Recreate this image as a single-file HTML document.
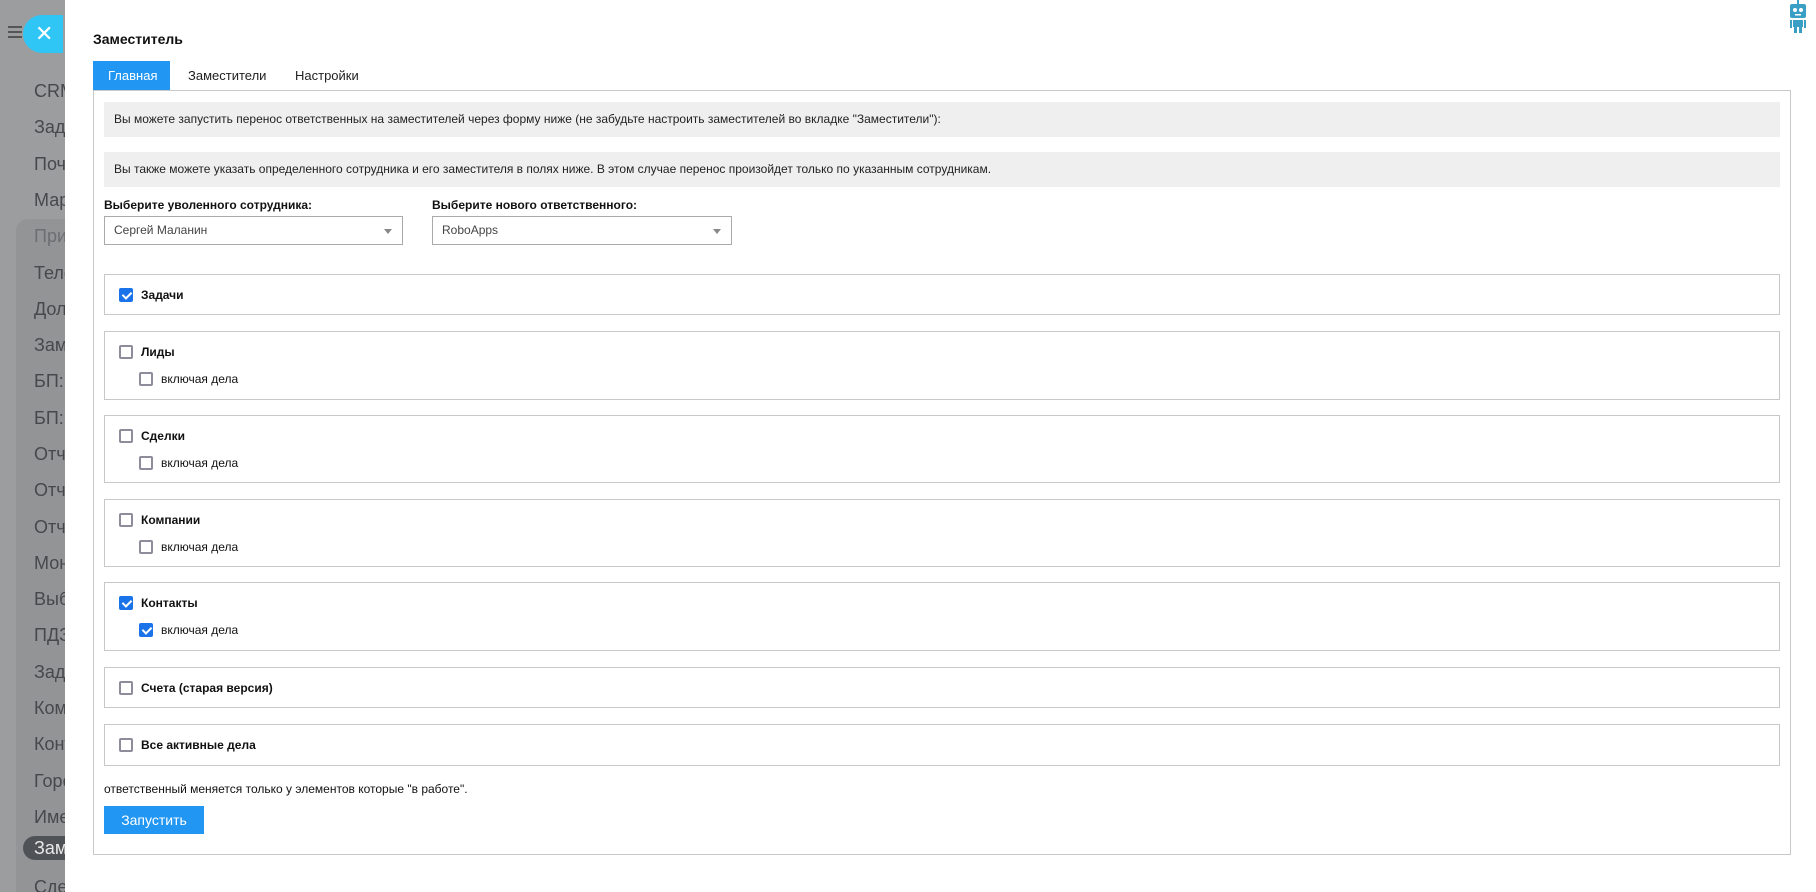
<!DOCTYPE html>
<html><head><meta charset="utf-8"><style>
*{box-sizing:border-box;margin:0;padding:0}
body{width:1816px;height:892px;overflow:hidden;font-family:"Liberation Sans",Arial,sans-serif;background:#fff;position:relative}
.side{position:absolute;left:0;top:0;width:65px;height:892px;background:#9b9d9f;overflow:hidden}
.side .inner{position:absolute;left:16px;top:219px;width:60px;height:700px;background:#929496;border-radius:12px 0 0 0}
.side .it{position:absolute;left:34px;font-size:18px;color:#46494c;white-space:nowrap;line-height:20px}
.side .act{position:absolute;left:23px;top:836px;width:60px;height:24px;background:#4f5358;border-radius:12px}
.x{position:absolute;left:23px;top:15px;width:40px;height:38px;border-radius:19px 0 0 19px;background:#2fc6f6;color:#fff;font-size:22px;line-height:38px;padding-left:12px}
.ham{position:absolute;left:8px;top:26px;width:14px;height:2px;background:#555;box-shadow:0 5px 0 #555,0 10px 0 #555}
.abs{position:absolute}
.title{left:93px;top:31px;font-size:14px;font-weight:bold;color:#111}
.tab{top:61px;height:29px;font-size:13px;line-height:29px;color:#222;padding:0 15px}
.tab.on{background:#2196f3;color:#fff}
.box{left:93px;top:90px;width:1698px;height:765px;border:1px solid #c8c8c8}
.bar{left:104px;width:1676px;height:35px;background:#efefef;font-size:12px;color:#222;line-height:35px;padding-left:10px}
.lbl{font-size:12px;font-weight:bold;color:#111}
.sel{height:29px;border:1px solid #aaa;font-size:12px;color:#444;line-height:27px;padding-left:9px;background:#fff}
.sel:after{content:"";position:absolute;right:10px;top:12px;border:4px solid transparent;border-top:5px solid #888}
.sec{left:104px;width:1676px;border:1px solid #c8c8c8}
.cb{position:absolute;width:14px;height:14px;border:2px solid #8c8c9a;border-radius:2px;background:#fff}
.cb.on{background:#1a73e8;border-color:#1a73e8}
.cb.on:after{content:"";position:absolute;left:3px;top:0px;width:4px;height:7px;border:solid #fff;border-width:0 2px 2px 0;transform:rotate(45deg)}
.t{position:absolute;font-size:12px;color:#111;line-height:14px;white-space:nowrap}
.t.b{font-weight:bold}
.note{left:104px;top:782px;font-size:12px;color:#111}
.btn{left:104px;top:806px;width:100px;height:28px;background:#2196f3;color:#fff;font-size:14px;line-height:28px;text-align:center}
</style></head><body>
<div class="side">
<div class="inner"></div>
<div class="act"></div>
<div class="it" style="top:81px">CRM</div>
<div class="it" style="top:117px">Задачи</div>
<div class="it" style="top:154px">Почта</div>
<div class="it" style="top:190px">Маркет</div>
<div class="it" style="top:226px;color:#6c6f72">Приложения</div>
<div class="it" style="top:263px">Телефония</div>
<div class="it" style="top:299px">Долги</div>
<div class="it" style="top:335px">Заместитель</div>
<div class="it" style="top:371px">БП: С</div>
<div class="it" style="top:408px">БП: З</div>
<div class="it" style="top:444px">Отчеты</div>
<div class="it" style="top:480px">Отчеты</div>
<div class="it" style="top:517px">Отчеты</div>
<div class="it" style="top:553px">Монитор</div>
<div class="it" style="top:589px">Выбор</div>
<div class="it" style="top:625px">ПДЗ</div>
<div class="it" style="top:662px">Задачи</div>
<div class="it" style="top:698px">Компании</div>
<div class="it" style="top:734px">Контакты</div>
<div class="it" style="top:771px">Города</div>
<div class="it" style="top:807px">Имена</div>
<div class="it" style="top:838px;color:#e8e8e8">Заместитель</div>
<div class="it" style="top:877px">Сделки</div>
</div>
<div class="ham"></div>
<div class="x">✕</div>

<svg class="abs" style="left:1788px;top:0" width="20" height="34" viewBox="0 0 20 34"><g fill="#3a9fc4"><rect x="9" y="0" width="2" height="5"/><rect x="2" y="4" width="16" height="14" rx="2"/><rect x="5" y="20" width="10" height="7"/><rect x="2" y="20" width="2" height="8"/><rect x="16" y="20" width="2" height="8"/><rect x="6" y="27" width="3" height="6"/><rect x="11" y="27" width="3" height="6"/></g><circle cx="7" cy="10" r="2" fill="#fff"/><circle cx="13" cy="10" r="2" fill="#fff"/><rect x="7" y="14" width="6" height="1.5" fill="#fff"/></svg>

<div class="abs title">Заместитель</div>
<div class="abs tab on" style="left:93px;width:77px">Главная</div>
<div class="abs tab" style="left:173px">Заместители</div>
<div class="abs tab" style="left:280px">Настройки</div>
<div class="abs box"></div>
<div class="abs bar" style="top:102px">Вы можете запустить перенос ответственных на заместителей через форму ниже (не забудьте настроить заместителей во вкладке "Заместители"):</div>
<div class="abs bar" style="top:152px">Вы также можете указать определенного сотрудника и его заместителя в полях ниже. В этом случае перенос произойдет только по указанным сотрудникам.</div>
<div class="abs lbl" style="left:104px;top:198px">Выберите уволенного сотрудника:</div>
<div class="abs lbl" style="left:432px;top:198px">Выберите нового ответственного:</div>
<div class="abs sel" style="left:104px;top:216px;width:299px">Сергей Маланин</div>
<div class="abs sel" style="left:432px;top:216px;width:300px">RoboApps</div>

<div class="abs sec" style="top:274px;height:41px"><div class="cb on" style="left:14px;top:13px"></div><div class="t b" style="left:36px;top:13px">Задачи</div></div>
<div class="abs sec" style="top:331px;height:69px"><div class="cb" style="left:14px;top:13px"></div><div class="t b" style="left:36px;top:13px">Лиды</div><div class="cb" style="left:34px;top:40px"></div><div class="t" style="left:56px;top:40px">включая дела</div></div>
<div class="abs sec" style="top:415px;height:68px"><div class="cb" style="left:14px;top:13px"></div><div class="t b" style="left:36px;top:13px">Сделки</div><div class="cb" style="left:34px;top:40px"></div><div class="t" style="left:56px;top:40px">включая дела</div></div>
<div class="abs sec" style="top:499px;height:68px"><div class="cb" style="left:14px;top:13px"></div><div class="t b" style="left:36px;top:13px">Компании</div><div class="cb" style="left:34px;top:40px"></div><div class="t" style="left:56px;top:40px">включая дела</div></div>
<div class="abs sec" style="top:582px;height:69px"><div class="cb on" style="left:14px;top:13px"></div><div class="t b" style="left:36px;top:13px">Контакты</div><div class="cb on" style="left:34px;top:40px"></div><div class="t" style="left:56px;top:40px">включая дела</div></div>
<div class="abs sec" style="top:667px;height:41px"><div class="cb" style="left:14px;top:13px"></div><div class="t b" style="left:36px;top:13px">Счета (старая версия)</div></div>
<div class="abs sec" style="top:724px;height:42px"><div class="cb" style="left:14px;top:13px"></div><div class="t b" style="left:36px;top:13px">Все активные дела</div></div>
<div class="abs note">ответственный меняется только у элементов которые "в работе".</div>
<div class="abs btn">Запустить</div>
</body></html>
